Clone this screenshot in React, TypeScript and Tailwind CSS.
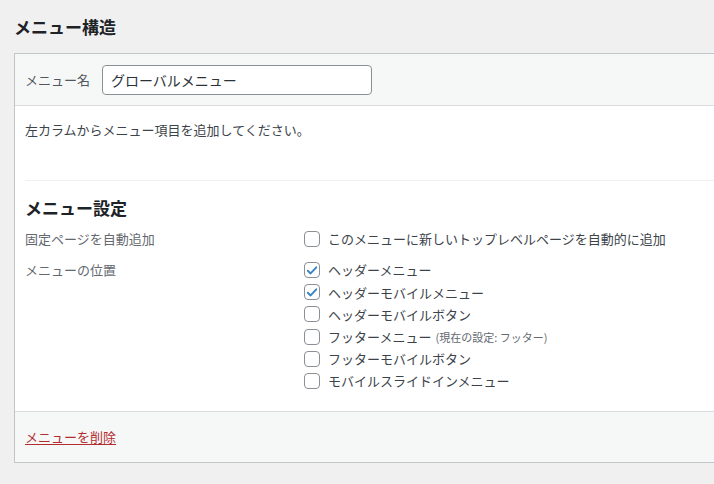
import { useState } from 'react';

const locations = [
    { id: 'header', label: 'ヘッダーメニュー', checked: true },
    { id: 'header-mobile', label: 'ヘッダーモバイルメニュー', checked: true },
    { id: 'header-mobile-button', label: 'ヘッダーモバイルボタン', checked: false },
    { id: 'footer', label: 'フッターメニュー', checked: false, note: '(現在の設定: フッター)' },
    { id: 'footer-mobile-button', label: 'フッターモバイルボタン', checked: false },
    { id: 'slide-in', label: 'モバイルスライドインメニュー', checked: false },
];

function Checkbox({ checked, onChange }: { checked: boolean; onChange: () => void }) {
    return (
        <button
            type="button"
            role="checkbox"
            aria-checked={checked}
            onClick={onChange}
            className="w-4 h-4 shrink-0 rounded-[4px] border border-[#8c8f94] bg-white flex items-center justify-center"
        >
            {checked && (
                <svg viewBox="0 0 16 16" className="w-[15px] h-[15px]">
                    <path d="M3.2 8.3 L6.4 11.4 L12.9 4.3" fill="none" stroke="#3582c4" strokeWidth="2.1" strokeLinecap="round" strokeLinejoin="round" />
                </svg>
            )}
        </button>
    );
}

export default function App() {
    const [menuName, setMenuName] = useState('グローバルメニュー');
    const [autoAdd, setAutoAdd] = useState(false);
    const [checked, setChecked] = useState<Record<string, boolean>>(
        Object.fromEntries(locations.map(l => [l.id, l.checked])),
    );

    const toggle = (id: string) => setChecked(prev => ({ ...prev, [id]: !prev[id] }));

    return (
        <div className="min-h-screen overflow-hidden bg-[#f0f0f1] text-[13px] text-[#3c434a] font-['Noto_Sans_CJK_JP','Liberation_Sans',sans-serif]">
            <h2 className="pl-[14px] pt-[16px] text-[17px] leading-[22px] font-bold text-[#1d2327]">メニュー構造</h2>

            <section className="mt-[15px] ml-[14px] w-[740px] border border-[#c3c4c7] bg-white">
                <header className="h-[52px] px-[10px] flex items-center bg-[#f6f7f7] border-b border-[#dcdcde]">
                    <label htmlFor="menu-name" className="w-[77px] text-[#50575e]">メニュー名</label>
                    <input
                        id="menu-name"
                        value={menuName}
                        onChange={e => setMenuName(e.target.value)}
                        className="w-[270px] h-[30px] px-[8px] rounded-[4px] border border-[#8c8f94] bg-white text-[14px] text-[#2c3338] outline-none"
                    />
                </header>

                <div className="px-[10px] pt-[14px] pb-[19px]">
                    <p className="leading-[20px]">左カラムからメニュー項目を追加してください。</p>

                    <div className="mt-[40px] border-t border-[#f0f0f1]" />

                    <h3 className="mt-[16px] text-[17px] leading-[22px] font-bold text-[#1d2327]">メニュー設定</h3>

                    <div className="mt-[10px] flex">
                        <div className="w-[279px] leading-[20px] text-[#646970]">固定ページを自動追加</div>
                        <label className="flex items-center gap-[8px] h-[20px]">
                            <Checkbox checked={autoAdd} onChange={() => setAutoAdd(v => !v)} />
                            <span>このメニューに新しいトップレベルページを自動的に追加</span>
                        </label>
                    </div>

                    <div className="mt-[10px] flex">
                        <div className="w-[279px] h-[22px] flex items-center text-[#646970]">メニューの位置</div>
                        <div className="flex flex-col">
                            {locations.map(loc => (
                                <label key={loc.id} className="flex items-center gap-[8px] h-[22.2px]">
                                    <Checkbox checked={checked[loc.id]} onChange={() => toggle(loc.id)} />
                                    <span>
                                        {loc.label}
                                        {loc.note && <span className="ml-[4px] text-[11px] text-[#646970]">{loc.note}</span>}
                                    </span>
                                </label>
                            ))}
                        </div>
                    </div>
                </div>

                <footer className="px-[10px] pt-[15px] pb-[15px] bg-[#f6f7f7] border-t border-[#dcdcde]">
                    <a href="#" className="leading-[20px] text-[#b32d2e] underline underline-offset-2">メニューを削除</a>
                </footer>
            </section>
        </div>
    );
}
